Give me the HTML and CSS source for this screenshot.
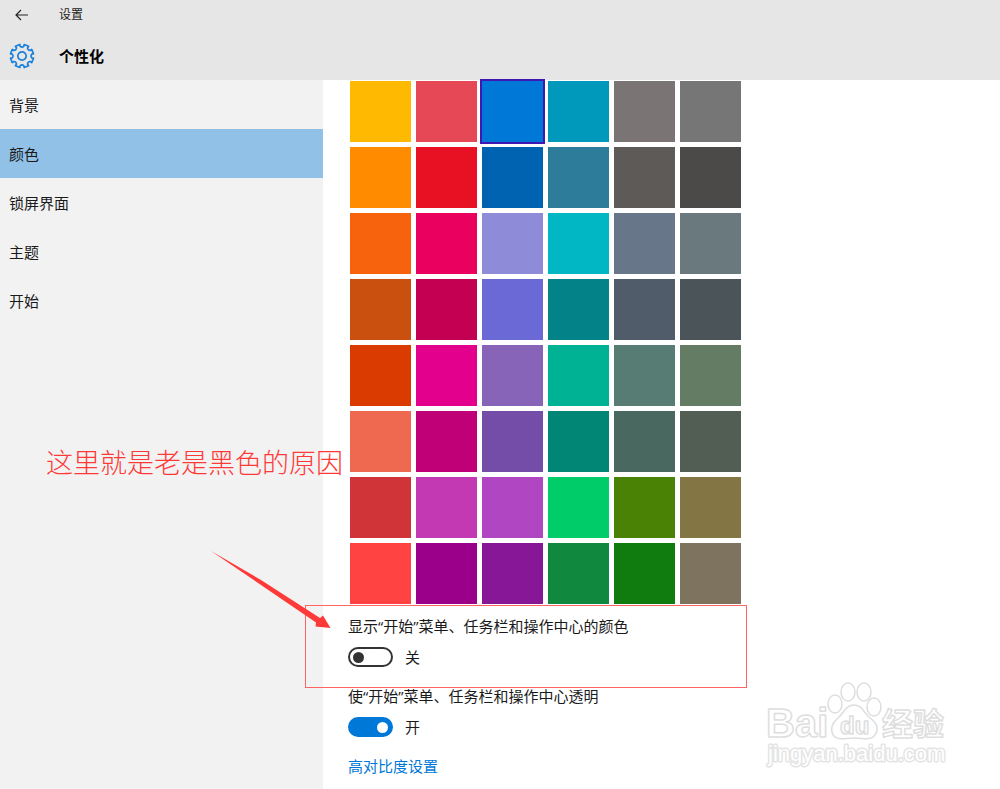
FILE: index.html
```html
<!DOCTYPE html>
<html lang="zh-CN">
<head>
  <meta charset="UTF-8" />
  <meta name="viewport" content="width=device-width, initial-scale=1.0"/>
  <title>设置</title>
  <link rel="stylesheet" href="styles.css">
</head>
<body>
  <header class="header">
    <div class="title-bar">
      <button class="back-button" type="button" aria-label="返回">
        <svg width="14" height="12" viewBox="0 0 14 12" fill="none" stroke="#222" stroke-width="1.2">
          <path d="M13 6H1M6 1L1 6L6 11"/>
        </svg>
      </button>
      <span class="app-title">设置</span>
    </div>
    <div class="page-bar">
      <svg class="gear" width="26" height="26" viewBox="-13 -13 26 26" fill="none" stroke="#1a80d9" stroke-width="1.7" stroke-linejoin="round">
        <path d="M11.5-2.2L9.6-1.8Q8.2 0 9.6 1.8L11.5 2.2L9.7 6.6L8.1 5.5Q5.8 5.8 5.5 8.1L6.6 9.7L2.2 11.5L1.8 9.6Q0 8.2-1.8 9.6L-2.2 11.5L-6.6 9.7L-5.5 8.1Q-5.8 5.8-8.1 5.5L-9.7 6.6L-11.5 2.2L-9.6 1.8Q-8.2 0-9.6-1.8L-11.5-2.2L-9.7-6.6L-8.1-5.5Q-5.8-5.8-5.5-8.1L-6.6-9.7L-2.2-11.5L-1.8-9.6Q0-8.2 1.8-9.6L2.2-11.5L6.6-9.7L5.5-8.1Q5.8-5.8 8.1-5.5L9.7-6.6Z"/>
        <circle r="4.2"/>
      </svg>
      <h1>个性化</h1>
    </div>
  </header>

  <div class="layout">
    <nav class="sidebar">
      <a href="#">背景</a>
      <a href="#" class="active">颜色</a>
      <a href="#">锁屏界面</a>
      <a href="#">主题</a>
      <a href="#">开始</a>
    </nav>

    <main class="content">
      <div class="swatches" role="radiogroup" aria-label="颜色">
        <input type="radio" name="color" class="c-ffb900" aria-label="#ffb900">
        <input type="radio" name="color" class="c-e74856" aria-label="#e74856">
        <input type="radio" name="color" class="c-0078d7" aria-label="#0078d7" checked>
        <input type="radio" name="color" class="c-0099bc" aria-label="#0099bc">
        <input type="radio" name="color" class="c-7a7574" aria-label="#7a7574">
        <input type="radio" name="color" class="c-767676" aria-label="#767676">

        <input type="radio" name="color" class="c-ff8c00" aria-label="#ff8c00">
        <input type="radio" name="color" class="c-e81123" aria-label="#e81123">
        <input type="radio" name="color" class="c-0063b1" aria-label="#0063b1">
        <input type="radio" name="color" class="c-2d7d9a" aria-label="#2d7d9a">
        <input type="radio" name="color" class="c-5d5a58" aria-label="#5d5a58">
        <input type="radio" name="color" class="c-4c4a48" aria-label="#4c4a48">

        <input type="radio" name="color" class="c-f7630c" aria-label="#f7630c">
        <input type="radio" name="color" class="c-ea005e" aria-label="#ea005e">
        <input type="radio" name="color" class="c-8e8cd8" aria-label="#8e8cd8">
        <input type="radio" name="color" class="c-00b7c3" aria-label="#00b7c3">
        <input type="radio" name="color" class="c-68768a" aria-label="#68768a">
        <input type="radio" name="color" class="c-69797e" aria-label="#69797e">

        <input type="radio" name="color" class="c-ca5010" aria-label="#ca5010">
        <input type="radio" name="color" class="c-c30052" aria-label="#c30052">
        <input type="radio" name="color" class="c-6b69d6" aria-label="#6b69d6">
        <input type="radio" name="color" class="c-038387" aria-label="#038387">
        <input type="radio" name="color" class="c-515c6b" aria-label="#515c6b">
        <input type="radio" name="color" class="c-4a5459" aria-label="#4a5459">

        <input type="radio" name="color" class="c-da3b01" aria-label="#da3b01">
        <input type="radio" name="color" class="c-e3008c" aria-label="#e3008c">
        <input type="radio" name="color" class="c-8764b8" aria-label="#8764b8">
        <input type="radio" name="color" class="c-00b294" aria-label="#00b294">
        <input type="radio" name="color" class="c-567c73" aria-label="#567c73">
        <input type="radio" name="color" class="c-647c64" aria-label="#647c64">

        <input type="radio" name="color" class="c-ef6950" aria-label="#ef6950">
        <input type="radio" name="color" class="c-bf0077" aria-label="#bf0077">
        <input type="radio" name="color" class="c-744da9" aria-label="#744da9">
        <input type="radio" name="color" class="c-018574" aria-label="#018574">
        <input type="radio" name="color" class="c-486860" aria-label="#486860">
        <input type="radio" name="color" class="c-525e54" aria-label="#525e54">

        <input type="radio" name="color" class="c-d13438" aria-label="#d13438">
        <input type="radio" name="color" class="c-c239b3" aria-label="#c239b3">
        <input type="radio" name="color" class="c-b146c2" aria-label="#b146c2">
        <input type="radio" name="color" class="c-00cc6a" aria-label="#00cc6a">
        <input type="radio" name="color" class="c-498205" aria-label="#498205">
        <input type="radio" name="color" class="c-847545" aria-label="#847545">

        <input type="radio" name="color" class="c-ff4343" aria-label="#ff4343">
        <input type="radio" name="color" class="c-9a0089" aria-label="#9a0089">
        <input type="radio" name="color" class="c-881798" aria-label="#881798">
        <input type="radio" name="color" class="c-10893e" aria-label="#10893e">
        <input type="radio" name="color" class="c-107c10" aria-label="#107c10">
        <input type="radio" name="color" class="c-7e735f" aria-label="#7e735f">
      </div>

      <div class="setting">
        <label for="showColor">显示“开始”菜单、任务栏和操作中心的颜色</label>
        <div class="toggle-row">
          <input type="checkbox" class="toggle" id="showColor">
          <span>关</span>
        </div>
        <div class="highlight-box"></div>
        <svg class="arrow" width="120" height="78" viewBox="0 0 120 78">
          <path fill="#fd3a38" d="M0 0L50 29L109 67L112 64.500L119.500 77L104.500 75.500L105 71.500L50 34Z"/>
        </svg>
      </div>

      <div class="setting">
        <label for="transparent">使“开始”菜单、任务栏和操作中心透明</label>
        <div class="toggle-row">
          <input type="checkbox" class="toggle" id="transparent" checked>
          <span>开</span>
        </div>
      </div>

      <a href="#" class="link">高对比度设置</a>
    </main>

    <p class="note">这里就是老是黑色的原因</p>

    <svg class="watermark" width="186" height="90" viewBox="0 0 186 90" fill="#fff" stroke="#dedede" stroke-width="1.5" stroke-linejoin="round">
      <text class="wm-logo" x="2" y="57">Bai</text>
      <ellipse cx="71" cy="24" rx="7" ry="9"/>
      <ellipse cx="84" cy="12" rx="7" ry="9"/>
      <ellipse cx="100" cy="12" rx="7" ry="9"/>
      <ellipse cx="110" cy="27" rx="7" ry="9"/>
      <path d="M90 25C98 25 100 33 106 38C113 43 115 49 111 55C107 61 99 58 90 58C81 58 73 61 69 55C66 49 68 43 74 38C80 33 82 25 90 25Z"/>
      <text class="wm-du" x="76" y="54">du</text>
      <text class="wm-cn" x="118" y="55">经验</text>
      <text class="wm-url" x="4" y="81">jingyan.baidu.com</text>
    </svg>
  </div>
</body>
</html>
```
FILE: styles.css
```css
* {
  margin: 0;
  padding: 0;
  box-sizing: border-box;
}

:root {
  --accent: #0078d7;
  --mark: #fd3a38;
  --text-color: #1a1a1a;
}

body {
  font-family: "Open Sans", "Noto Sans CJK SC", sans-serif;
  font-size: 15px;
  line-height: 22px;
  color: var(--text-color);
  background: #fff;
  min-height: 100vh;
  display: flex;
  flex-direction: column;
}

/* Header */
.header {
  height: 80px;
  background: #e6e6e6;
}

.title-bar,
.page-bar {
  display: flex;
  align-items: center;
}

.title-bar {
  height: 30px;
  padding-left: 15px;
  gap: 30px;
}

.back-button {
  display: flex;
  border: none;
  background: none;
  cursor: pointer;
}

.app-title {
  font-size: 12px;
}

.page-bar {
  height: 52px;
  padding-left: 9px;
  gap: 24px;
}

h1 {
  font-size: 15px;
  font-weight: 700;
  color: #000;
}

/* Layout */
.layout {
  position: relative;
  flex: 1;
  display: flex;
}

.sidebar {
  width: 323px;
  flex-shrink: 0;
  background: #f2f2f2;
}

.sidebar a {
  display: flex;
  align-items: center;
  height: 49px;
  padding-left: 9px;
  color: var(--text-color);
  text-decoration: none;
}

.sidebar a.active {
  background: #91c1e7;
}

.content {
  flex: 1;
  padding: 1px 25px 11px;
}

/* Colour grid */
.swatches {
  display: grid;
  grid-template-columns: repeat(6, 61px);
  grid-auto-rows: 61px;
  gap: 5px;
  padding-left: 2px;
  margin-bottom: 11px;
}

.swatches input {
  appearance: none;
  cursor: pointer;
}

.swatches input:checked {
  outline: 2px solid #4016b4;
}

.c-ffb900 { background: #ffb900; }
.c-e74856 { background: #e74856; }
.c-0078d7 { background: #0078d7; }
.c-0099bc { background: #0099bc; }
.c-7a7574 { background: #7a7574; }
.c-767676 { background: #767676; }
.c-ff8c00 { background: #ff8c00; }
.c-e81123 { background: #e81123; }
.c-0063b1 { background: #0063b1; }
.c-2d7d9a { background: #2d7d9a; }
.c-5d5a58 { background: #5d5a58; }
.c-4c4a48 { background: #4c4a48; }
.c-f7630c { background: #f7630c; }
.c-ea005e { background: #ea005e; }
.c-8e8cd8 { background: #8e8cd8; }
.c-00b7c3 { background: #00b7c3; }
.c-68768a { background: #68768a; }
.c-69797e { background: #69797e; }
.c-ca5010 { background: #ca5010; }
.c-c30052 { background: #c30052; }
.c-6b69d6 { background: #6b69d6; }
.c-038387 { background: #038387; }
.c-515c6b { background: #515c6b; }
.c-4a5459 { background: #4a5459; }
.c-da3b01 { background: #da3b01; }
.c-e3008c { background: #e3008c; }
.c-8764b8 { background: #8764b8; }
.c-00b294 { background: #00b294; }
.c-567c73 { background: #567c73; }
.c-647c64 { background: #647c64; }
.c-ef6950 { background: #ef6950; }
.c-bf0077 { background: #bf0077; }
.c-744da9 { background: #744da9; }
.c-018574 { background: #018574; }
.c-486860 { background: #486860; }
.c-525e54 { background: #525e54; }
.c-d13438 { background: #d13438; }
.c-c239b3 { background: #c239b3; }
.c-b146c2 { background: #b146c2; }
.c-00cc6a { background: #00cc6a; }
.c-498205 { background: #498205; }
.c-847545 { background: #847545; }
.c-ff4343 { background: #ff4343; }
.c-9a0089 { background: #9a0089; }
.c-881798 { background: #881798; }
.c-10893e { background: #10893e; }
.c-107c10 { background: #107c10; }
.c-7e735f { background: #7e735f; }

/* Settings */
.setting {
  position: relative;
  margin-bottom: 17px;
}

.setting label {
  display: block;
}

.toggle-row {
  display: flex;
  align-items: center;
  gap: 12px;
  height: 22px;
  margin-top: 9px;
}

.toggle {
  appearance: none;
  display: flex;
  align-items: center;
  width: 45px;
  height: 20px;
  padding: 0 3px;
  border: 2px solid #333;
  border-radius: 10px;
  cursor: pointer;
}

.toggle::before {
  content: "";
  width: 11px;
  height: 11px;
  border-radius: 50%;
  background: #333;
}

.toggle:checked {
  justify-content: flex-end;
  border-color: var(--accent);
  background: var(--accent);
}

.toggle:checked::before {
  background: #fff;
}

.link {
  display: inline-block;
  color: var(--accent);
  text-decoration: none;
}

/* Marks drawn over the page */
.highlight-box {
  position: absolute;
  left: -43px;
  top: -10px;
  width: 442px;
  height: 83px;
  border: 1px solid #ff6464;
  pointer-events: none;
}

.arrow {
  position: absolute;
  left: -137px;
  top: -64px;
  pointer-events: none;
}

.note {
  position: absolute;
  left: 46px;
  top: 362px;
  font-family: "Noto Sans CJK SC", sans-serif;
  font-size: 27px;
  font-weight: 300;
  line-height: 40px;
  white-space: nowrap;
  color: var(--mark);
}

.watermark {
  position: absolute;
  right: 50px;
  bottom: 19px;
  pointer-events: none;
}

.watermark text {
  font-family: "Liberation Sans", "Noto Sans CJK SC", sans-serif;
  font-weight: 700;
}

.wm-logo {
  font-size: 40px;
}

.wm-du {
  font-size: 24px;
}

.wm-cn {
  font-size: 31px;
}

.watermark .wm-url {
  font-size: 22px;
  font-weight: 400;
  stroke: #e4e4e4;
  stroke-width: 3px;
  paint-order: stroke;
}
```
